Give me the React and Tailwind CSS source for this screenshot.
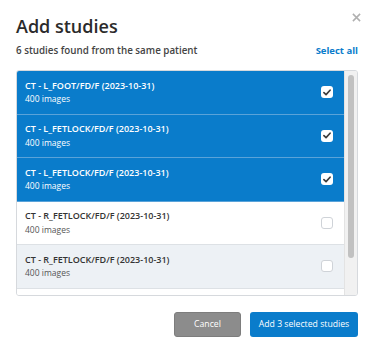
import React from "react";

const studies = [
  { name: "CT - L_FOOT/FD/F (2023-10-31)", count: 400, selected: true },
  { name: "CT - L_FETLOCK/FD/F (2023-10-31)", count: 400, selected: true },
  { name: "CT - L_FETLOCK/FD/F (2023-10-31)", count: 400, selected: true },
  { name: "CT - R_FETLOCK/FD/F (2023-10-31)", count: 400, selected: false },
  { name: "CT - R_FETLOCK/FD/F (2023-10-31)", count: 400, selected: false, hover: true },
  { name: "CT - R_FOOT/FD/F (2023-10-31)", count: 400, selected: false },
];

function CheckBox({ checked }) {
  return (
    <div className={`w-[12px] h-[12px] rounded-[3px] bg-white flex items-center justify-center ${checked ? "" : "border border-[#cfd3d8]"}`}>
      {checked && (
        <svg width="8" height="7" viewBox="0 0 9 8">
          <path d="M1 4.2 L3.4 6.4 L8 1.4" fill="none" stroke="#3d3d3d" strokeWidth="1.9" strokeLinecap="round" strokeLinejoin="round" />
        </svg>
      )}
    </div>
  );
}

export default function App() {
  return (
    <div className="w-[374px] h-[350px] bg-white relative" style={{ fontFamily: '"Open Sans", sans-serif' }}>
      <button className="absolute right-[13px] top-[13px] text-[#b0b0b0]">
        <svg width="9" height="9" viewBox="0 0 10 10">
          <path d="M1 1 L9 9 M9 1 L1 9" stroke="currentColor" strokeWidth="1.7" />
        </svg>
      </button>

      <div className="px-4 pt-[12px]">
        <h2 className="text-[18px] font-semibold text-[#2b2b2b] leading-[28px]">Add studies</h2>
        <div className="flex justify-between items-center mt-[4px] leading-[14px] font-semibold">
          <span className="text-[#444] text-[9.8px]">6 studies found from the same patient</span>
          <span className="text-[#0a7ccb] text-[9.5px] font-bold">Select all</span>
        </div>

        <div className="mt-[12px] h-[226px] border border-[#d6d9dd] rounded-[3px] flex overflow-hidden">
          <div className="flex-1 overflow-hidden">
            {studies.map((s, i) => (
              <div
                key={i}
                className={`h-[43.5px] flex items-center justify-between pl-[8px] pr-[11px] border-b ${
                  s.selected
                    ? "bg-[#0a7ccb] text-white border-[#5aa3d9]"
                    : s.hover
                    ? "bg-[#edf1f5] text-[#333] border-[#dde1e5]"
                    : "bg-white text-[#333] border-[#dde1e5]"
                }`}
              >
                <div className="leading-[13.5px]">
                  <div className="text-[9px] font-semibold">{s.name}</div>
                  <div className={`text-[8.5px] ${s.selected ? "text-white" : "text-[#555]"}`}>{s.count} images</div>
                </div>
                <CheckBox checked={s.selected} />
              </div>
            ))}
          </div>
          <div className="w-[13px] bg-[#f1f1f1] border-l border-[#e3e3e3] flex justify-center pt-[4px]">
            <div className="w-[6px] h-[183px] rounded-full bg-[#c1c1c1]" />
          </div>
        </div>

        <div className="flex justify-end gap-[9px] mt-[16px]">
          <button className="w-[67px] h-[25px] rounded-[3px] bg-[#8c8c8c] border border-[#7d7d7d] text-white text-[8.7px] whitespace-nowrap">
            Cancel
          </button>
          <button className="w-[108px] h-[25px] rounded-[3px] bg-[#0a7ccb] text-white text-[8.7px] whitespace-nowrap">
            Add 3 selected studies
          </button>
        </div>
      </div>
    </div>
  );
}
